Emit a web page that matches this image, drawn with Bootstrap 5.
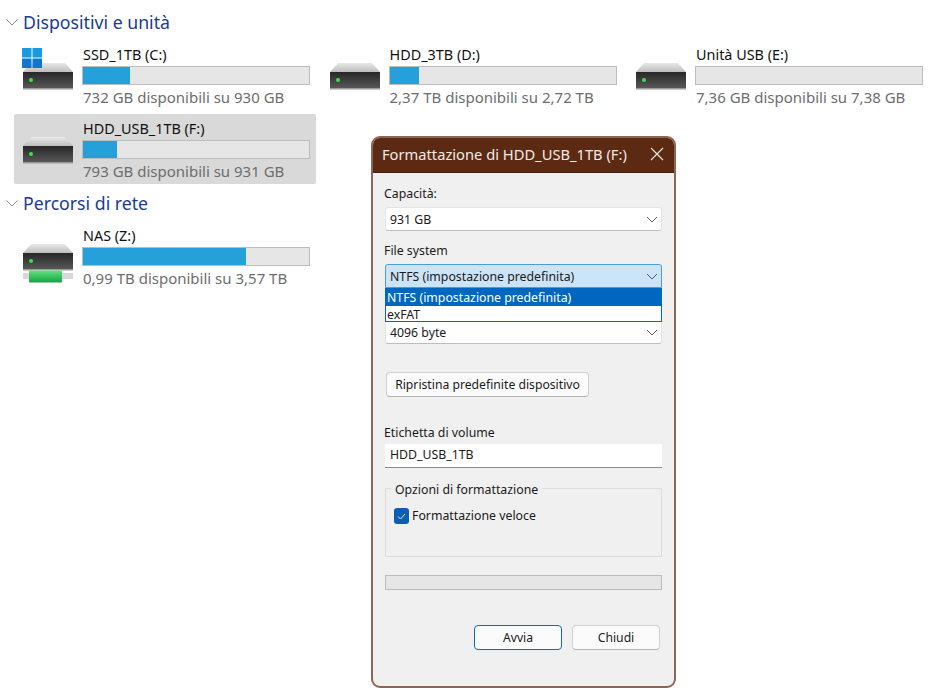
<!doctype html>
<html lang="it">
<head>
<meta charset="utf-8">
<title>Formattazione</title>
<link href="https://cdn.jsdelivr.net/npm/bootstrap@5.3.0/dist/css/bootstrap.min.css" rel="stylesheet">
<style>
html,body{background:#fff;height:700px;overflow:hidden}
body{font-family:"Noto Sans","Open Sans","Liberation Sans",sans-serif;font-size:14px;color:#1a1a1a;position:relative}
.explorer{padding:11px 0 0 14px}
.sect-head{height:22px;margin:0 0 7px -8px;color:#1b3a94;font-size:17.7px;line-height:22px;gap:5px}
.sect-head svg{flex:none}
.drive-grid{display:grid;grid-template-columns:repeat(3,302px);column-gap:4.5px;row-gap:4px;margin-bottom:8px}
.drive-tile{height:70px;padding:0 6px 0 8px;border-radius:2px;gap:8px;position:relative}
.drive-tile.chosen{background:#d9d9d9}
.drive-icon{width:52px;margin-top:22px;flex:none;display:block}
.drive-info{width:228px;padding-top:6px}
.drive-name{line-height:18px;height:18px;padding-left:1px;font-size:14.4px;color:#111}
.drive-bar{height:19px;margin-top:2px;border:1px solid #bcbcbc;background:#e6e6e6;border-radius:0;display:flex}
.drive-fill{background:#26a0da;height:100%}
.drive-free{color:#6d6d6d;line-height:18px;margin-top:3px;padding-left:1px;font-size:15px;white-space:nowrap}
.win-logo{position:absolute;left:8px;top:8px}
.fmt-window{position:absolute;left:371px;top:136px;width:305px;height:552px;background:#f0f0f0;border:2px solid #8c6656;border-radius:9px;overflow:hidden;font-size:12.3px;color:#1a1a1a}
.fmt-title{height:35px;background:#5c2a13;color:#f2ebe7;font-size:14.7px;padding:0 10px 2px 9px;border-bottom:1px solid #4a200c}
.fmt-body{padding:12px 12px 0 12px}
.fmt-label{height:17px;line-height:17px;margin-bottom:5px;margin-left:-1px}
.fmt-combo{height:24px;width:277px;margin-bottom:11px;background:#fff;border:1px solid #e3e3e3;border-bottom-color:#bdbdbd;border-radius:3px;padding:1px 3px 0 4px;position:relative;line-height:22px}
.fmt-combo.open{background:#cce4f7;border:1px solid #4d9bd8;border-radius:3px 3px 0 0;margin-bottom:0}
.fmt-menu{position:absolute;left:-1px;top:23px;width:277px;height:34px;background:#fff;border:1px solid #0067c0;z-index:3;line-height:17px;padding:0}
.fmt-menu div{height:15px;padding-left:1px}
.fmt-menu .picked{background:#0067c0;color:#fff;height:17px;line-height:18px}
.fmt-spacer{height:32px}
.fmt-btn{font-size:12.2px;color:#1a1a1a;background:#fbfbfb;border:1px solid #d0d0d0;border-bottom-color:#b4b4b4;border-radius:4px;padding:0;height:25px;line-height:22px}
.fmt-btn:hover{background:#fbfbfb;border-color:#d0d0d0;color:#1a1a1a}
.restore-btn{width:203px;margin:28px 0 0 1px;display:block}
.volume-label{margin-top:27px;margin-bottom:3px}
.fmt-input{height:24px;width:277px;background:#fff;border:0;border-bottom:1px solid #8c8c8c;border-radius:0;padding:0 5px;font-size:12.3px;color:#1a1a1a;line-height:22px}
.fmt-group{position:relative;width:277px;height:69px;border:1px solid #dcdcdc;margin-top:20px;padding:18px 0 0 8px}
.fmt-legend{position:absolute;left:5px;top:-7px;background:#f0f0f0;padding:0 4px;line-height:15px}
.fmt-check{width:15px;height:16px;background:#0a5fb4;border-radius:3px;flex:none;display:flex;align-items:center;justify-content:center}
.fmt-check-row{gap:3px}
.fmt-progress{height:15px;width:277px;margin-top:18px;background:#e6e6e6;border:1px solid #bcbcbc;border-radius:0}
.fmt-actions{width:275px;margin-top:35px;gap:10px}
.fmt-actions .fmt-btn{width:88px}
.fmt-actions .primary-act{border:1.5px solid #0a6cbd}
</style>
</head>
<body>
<svg width="0" height="0" class="position-absolute">
<defs>
<linearGradient id="topG" x1="0" y1="0" x2="0" y2="1"><stop offset="0" stop-color="#e8e8e8"/><stop offset="1" stop-color="#bdbdbd"/></linearGradient>
<linearGradient id="bodyG" x1="0" y1="0" x2="0" y2="1"><stop offset="0" stop-color="#272727"/><stop offset="1" stop-color="#5a5a5a"/></linearGradient>
<linearGradient id="nasG" x1="0" y1="0" x2="0" y2="1"><stop offset="0" stop-color="#62e07e"/><stop offset="1" stop-color="#17a245"/></linearGradient>
<symbol id="hdd" viewBox="0 0 52 28">
<path d="M9 1H43L51 10H1Z" fill="url(#topG)"/>
<rect x="1" y="10" width="50" height="17" fill="url(#bodyG)"/>
<rect x="1" y="26" width="50" height="1.5" fill="#9a9a9a"/>
<circle cx="9" cy="18" r="2" fill="#39e04c"/>
</symbol>
</defs>
</svg>

<div class="explorer">
  <div class="sect-head d-flex align-items-center">
    <svg width="12" height="8" viewBox="0 0 12 8"><path d="M.5 1.5 6 7 11.5 1.5" fill="none" stroke="#8a8a8a" stroke-width="1"/></svg>
    <span>Dispositivi e unità</span>
  </div>
  <div class="drive-grid">
    <div class="drive-tile d-flex">
      <svg class="drive-icon" height="28" viewBox="0 0 52 28"><use href="#hdd"/></svg>
      <svg class="win-logo" width="20" height="20" viewBox="0 0 20 20"><g fill="#1b9ae4"><rect width="9.5" height="9.5"/><rect x="10.5" width="9.5" height="9.5"/></g><g fill="#0d78cf"><rect y="10.5" width="9.5" height="9.5"/><rect x="10.5" y="10.5" width="9.5" height="9.5"/></g></svg>
      <div class="drive-info">
        <div class="drive-name">SSD_1TB (C:)</div>
        <div class="drive-bar"><div class="drive-fill" style="width:21%"></div></div>
        <div class="drive-free">732 GB disponibili su 930 GB</div>
      </div>
    </div>
    <div class="drive-tile d-flex">
      <svg class="drive-icon" height="28" viewBox="0 0 52 28"><use href="#hdd"/></svg>
      <div class="drive-info">
        <div class="drive-name">HDD_3TB (D:)</div>
        <div class="drive-bar"><div class="drive-fill" style="width:13%"></div></div>
        <div class="drive-free">2,37 TB disponibili su 2,72 TB</div>
      </div>
    </div>
    <div class="drive-tile d-flex">
      <svg class="drive-icon" height="28" viewBox="0 0 52 28"><use href="#hdd"/></svg>
      <div class="drive-info">
        <div class="drive-name">Unità USB (E:)</div>
        <div class="drive-bar"><div class="drive-fill" style="width:0"></div></div>
        <div class="drive-free">7,36 GB disponibili su 7,38 GB</div>
      </div>
    </div>
    <div class="drive-tile chosen d-flex">
      <svg class="drive-icon" height="28" viewBox="0 0 52 28"><use href="#hdd"/></svg>
      <div class="drive-info">
        <div class="drive-name">HDD_USB_1TB (F:)</div>
        <div class="drive-bar"><div class="drive-fill" style="width:15%"></div></div>
        <div class="drive-free">793 GB disponibili su 931 GB</div>
      </div>
    </div>
  </div>
  <div class="sect-head d-flex align-items-center">
    <svg width="12" height="8" viewBox="0 0 12 8"><path d="M.5 1.5 6 7 11.5 1.5" fill="none" stroke="#8a8a8a" stroke-width="1"/></svg>
    <span>Percorsi di rete</span>
  </div>
  <div class="drive-grid">
    <div class="drive-tile d-flex">
      <svg class="drive-icon" height="40" viewBox="0 0 52 40">
        <use href="#hdd" width="52" height="28"/>
        <rect x="1" y="30" width="50" height="6" fill="#d8d8d8"/>
        <rect x="7" y="27.500" width="33" height="12" rx="1" fill="url(#nasG)"/>
      </svg>
      <div class="drive-info">
        <div class="drive-name">NAS (Z:)</div>
        <div class="drive-bar"><div class="drive-fill" style="width:72%"></div></div>
        <div class="drive-free">0,99 TB disponibili su 3,57 TB</div>
      </div>
    </div>
  </div>
</div>

<div class="fmt-window">
  <div class="fmt-title d-flex align-items-center justify-content-between">
    <span>Formattazione di HDD_USB_1TB (F:)</span>
    <svg width="14" height="14" viewBox="0 0 14 14"><path d="M1 1 13 13M13 1 1 13" stroke="#f2ebe7" stroke-width="1.1" fill="none"/></svg>
  </div>
  <div class="fmt-body">
    <div class="fmt-label">Capacità:</div>
    <div class="fmt-combo d-flex align-items-center justify-content-between">
      <span>931 GB</span>
      <svg width="12" height="7" viewBox="0 0 12 7"><path d="M1 1 6 6 11 1" fill="none" stroke="#5a5a5a"/></svg>
    </div>
    <div class="fmt-label">File system</div>
    <div class="fmt-combo open d-flex align-items-center justify-content-between">
      <span>NTFS (impostazione predefinita)</span>
      <svg width="12" height="7" viewBox="0 0 12 7"><path d="M1 1 6 6 11 1" fill="none" stroke="#5a5a5a"/></svg>
      <div class="fmt-menu">
        <div class="picked">NTFS (impostazione predefinita)</div>
        <div>exFAT</div>
      </div>
    </div>
    <div class="fmt-spacer"></div>
    <div class="fmt-combo d-flex align-items-center justify-content-between mb-0">
      <span>4096 byte</span>
      <svg width="12" height="7" viewBox="0 0 12 7"><path d="M1 1 6 6 11 1" fill="none" stroke="#5a5a5a"/></svg>
    </div>
    <button type="button" class="btn fmt-btn restore-btn">Ripristina predefinite dispositivo</button>
    <div class="fmt-label volume-label">Etichetta di volume</div>
    <div class="fmt-input">HDD_USB_1TB</div>
    <div class="fmt-group">
      <div class="fmt-legend">Opzioni di formattazione</div>
      <div class="d-flex align-items-center fmt-check-row">
        <span class="fmt-check"><svg width="9" height="7" viewBox="0 0 9 7"><path d="M1 3.5 3.5 6 8 1" fill="none" stroke="#dcecf9" stroke-width="1"/></svg></span>
        <span>Formattazione veloce</span>
      </div>
    </div>
    <div class="fmt-progress"></div>
    <div class="fmt-actions d-flex justify-content-end">
      <button type="button" class="btn fmt-btn primary-act">Avvia</button>
      <button type="button" class="btn fmt-btn">Chiudi</button>
    </div>
  </div>
</div>
<script src="https://cdn.jsdelivr.net/npm/bootstrap@5.3.0/dist/js/bootstrap.bundle.min.js"></script>
</body>
</html>
